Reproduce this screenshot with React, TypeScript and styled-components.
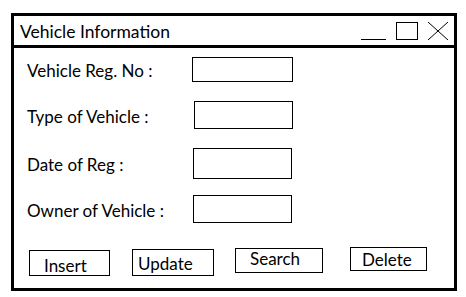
import styled, { createGlobalStyle } from "styled-components";

const GlobalStyle = createGlobalStyle`
  html, body {
    margin: 0;
    padding: 0;
    background: #ffffff;
  }
  body {
    font-family: "Lato", "Open Sans", sans-serif;
    color: #000000;
  }
`;

interface Field {
  label: string;
  gap: number;
  boxLeft: number;
  boxWidth: number;
  boxHeight: number;
}

const fields: Field[] = [
  { label: "Vehicle Reg. No :", gap: 9, boxLeft: 192, boxWidth: 101, boxHeight: 25 },
  { label: "Type of Vehicle :", gap: 19, boxLeft: 194, boxWidth: 99, boxHeight: 28 },
  { label: "Date of Reg :", gap: 19, boxLeft: 193, boxWidth: 99, boxHeight: 31 },
  { label: "Owner of Vehicle :", gap: 16, boxLeft: 193, boxWidth: 99, boxHeight: 28 },
];

interface Action {
  label: string;
  left: number;
  width: number;
  height: number;
  top: number;
  padLeft: number;
  padTop: number;
}

const actions: Action[] = [
  { label: "Insert", left: 2, width: 81, height: 26, top: 27, padLeft: 14, padTop: 5 },
  { label: "Update", left: 22, width: 82, height: 27, top: 26, padLeft: 5, padTop: 4 },
  { label: "Search", left: 21, width: 88, height: 25, top: 25, padLeft: 14, padTop: 0 },
  { label: "Delete", left: 27, width: 77, height: 24, top: 24, padLeft: 11, padTop: 2 },
];

const App = () => {
  return (
    <>
      <GlobalStyle />
      <Window>
        <TitleBar>
          <Title>Vehicle Information</Title>
          <Controls>
            <MinimizeIcon />
            <MaximizeIcon />
            <CloseIcon viewBox="0 0 20 18" width={20} height={18}>
              <path d="M0 0 L20 18 M20 0 L0 18" stroke="#000" strokeWidth="1" fill="none" />
            </CloseIcon>
          </Controls>
        </TitleBar>
        <Form>
          {fields.map((f) => (
            <Row key={f.label} $gap={f.gap}>
              <Label>{f.label}</Label>
              <InputBox $left={f.boxLeft} $width={f.boxWidth} $height={f.boxHeight} />
            </Row>
          ))}
          <ButtonRow>
            {actions.map((a) => (
              <ActionButton
                key={a.label}
                $left={a.left}
                $width={a.width}
                $height={a.height}
                $top={a.top}
                $padLeft={a.padLeft}
                $padTop={a.padTop}
              >
                {a.label}
              </ActionButton>
            ))}
          </ButtonRow>
        </Form>
      </Window>
    </>
  );
};

const Window = styled.div`
  box-sizing: border-box;
  margin: 13px 0 0 11px;
  width: 446px;
  height: 278px;
  border: 3px solid #000;
  display: flex;
  flex-direction: column;
`;

const TitleBar = styled.div`
  height: 29px;
  border-bottom: 3px solid #000;
  display: flex;
  align-items: center;
  justify-content: space-between;
  padding-left: 6px;
`;

const Title = styled.span`
  font-size: 17.5px;
  line-height: 20px;
  padding-top: 2px;
`;

const Controls = styled.div`
  display: flex;
  align-items: center;
  gap: 10px;
  padding-right: 6px;
  padding-top: 1px;
`;

const MinimizeIcon = styled.span`
  display: block;
  width: 25px;
  height: 1px;
  background: #000;
  margin-top: 16px;
`;

const MaximizeIcon = styled.span`
  display: block;
  box-sizing: border-box;
  width: 22px;
  height: 18px;
  border: 1px solid #000;
`;

const CloseIcon = styled.svg`
  display: block;
`;

const Form = styled.div`
  display: flex;
  flex-direction: column;
  padding-left: 13px;
`;

const Row = styled.div<{ $gap: number }>`
  display: flex;
  align-items: center;
  margin-top: ${(p) => p.$gap}px;
`;

const Label = styled.span`
  font-size: 17px;
  line-height: 20px;
  width: 0;
  white-space: nowrap;
  padding-top: 3px;
`;

const InputBox = styled.div<{ $left: number; $width: number; $height: number }>`
  box-sizing: border-box;
  margin-left: ${(p) => p.$left - 27}px;
  width: ${(p) => p.$width}px;
  height: ${(p) => p.$height}px;
  border: 1px solid #000;
`;

const ButtonRow = styled.div`
  display: flex;
  align-items: flex-start;
`;

const ActionButton = styled.div<{
  $left: number;
  $width: number;
  $height: number;
  $top: number;
  $padLeft: number;
  $padTop: number;
}>`
  box-sizing: border-box;
  margin-left: ${(p) => p.$left}px;
  margin-top: ${(p) => p.$top}px;
  width: ${(p) => p.$width}px;
  height: ${(p) => p.$height}px;
  border: 1px solid #000;
  padding-left: ${(p) => p.$padLeft}px;
  padding-top: ${(p) => p.$padTop}px;
  font-size: 17px;
  line-height: 20px;
`;

export default App;
